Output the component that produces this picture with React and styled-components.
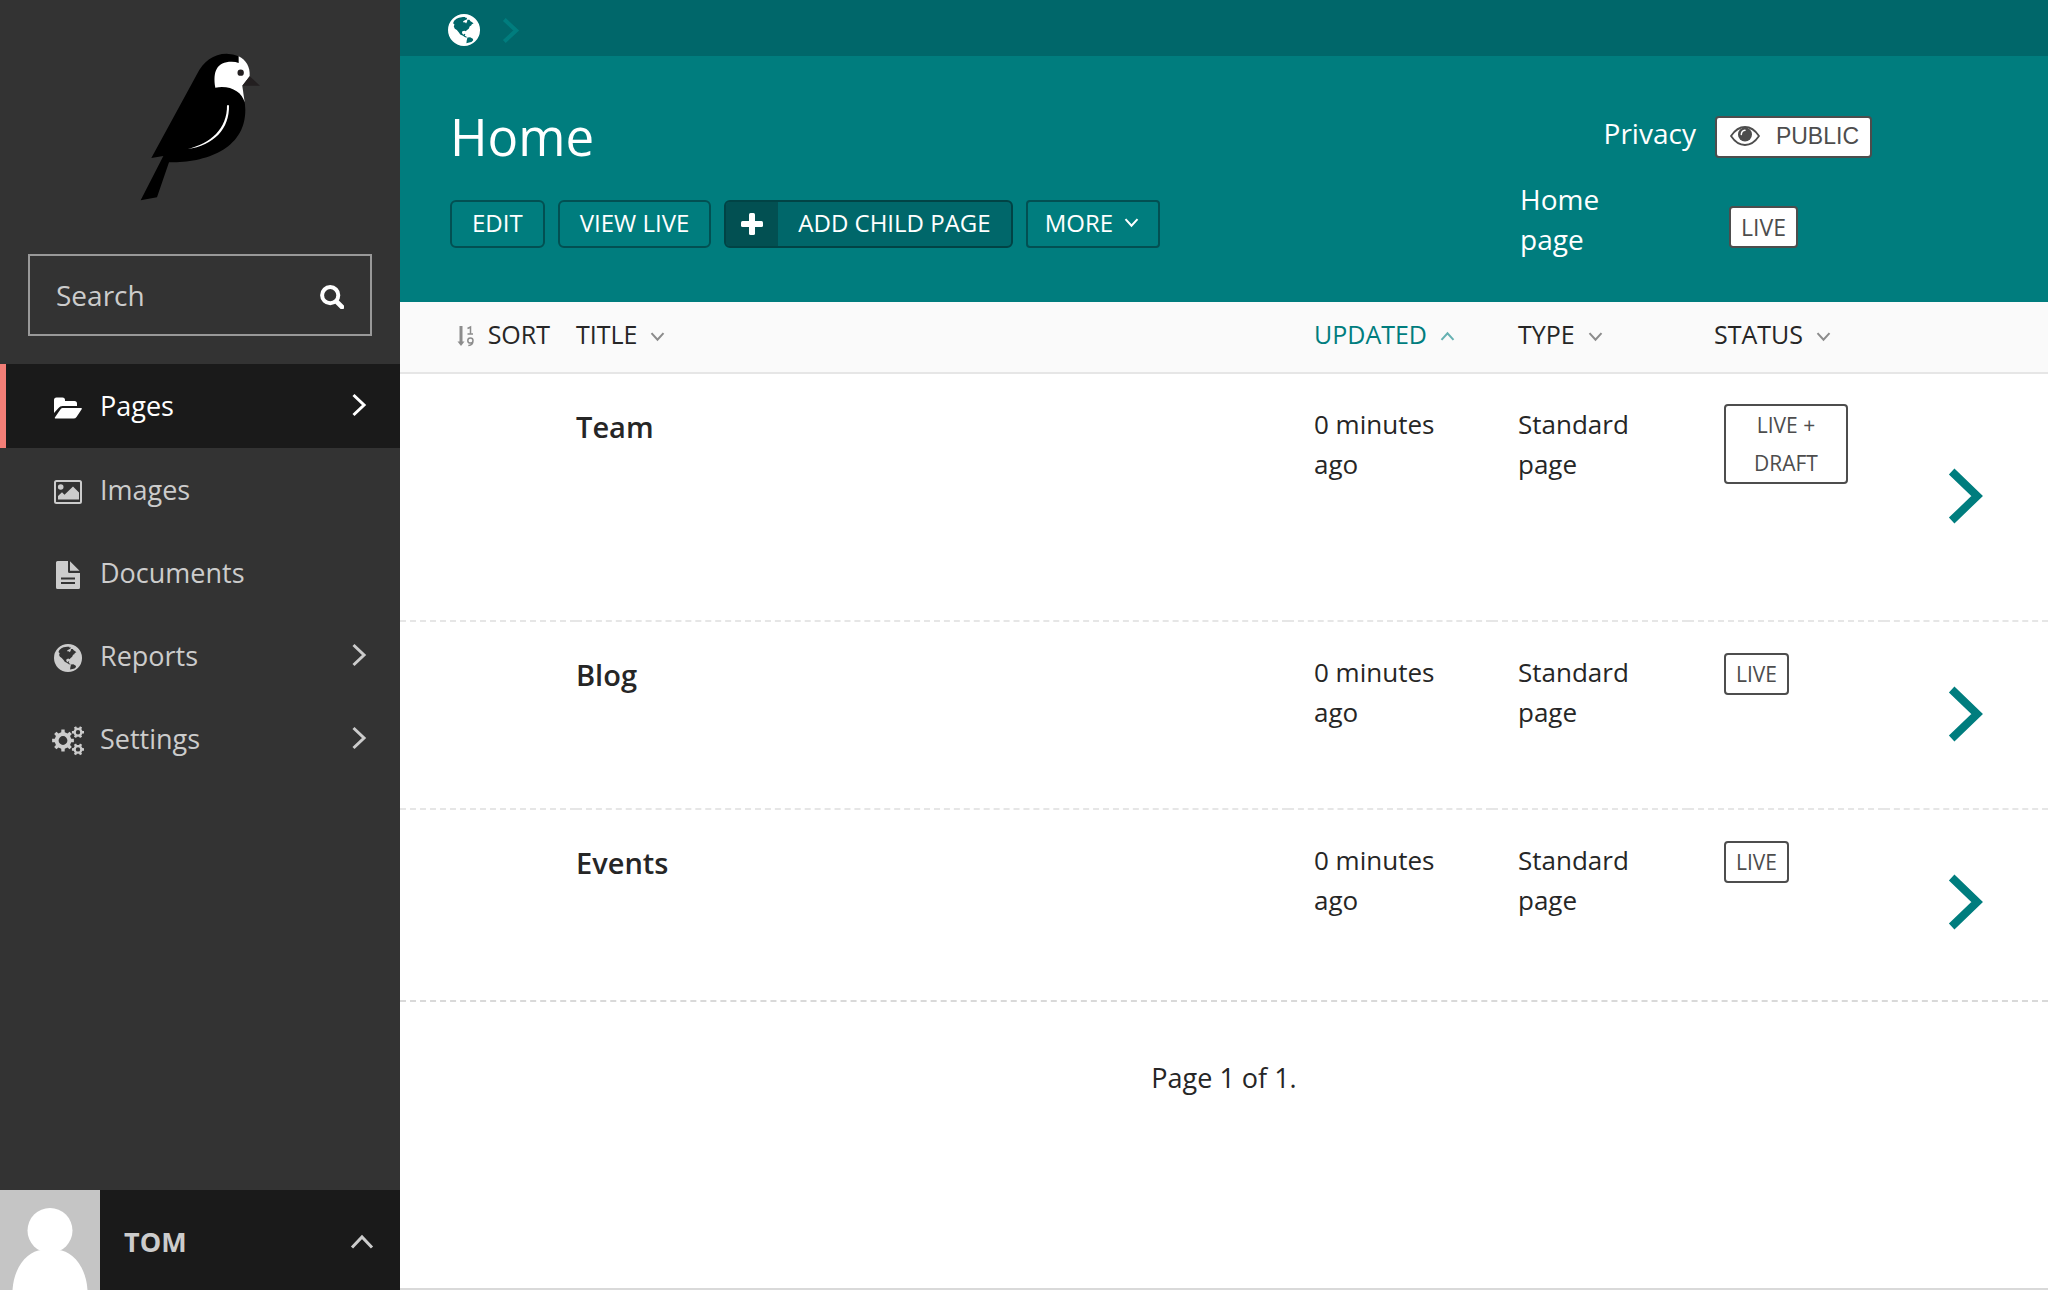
import React from 'react';
import styled, { createGlobalStyle, css } from 'styled-components';

const GlobalStyle = createGlobalStyle`
  *, *::before, *::after { box-sizing: border-box; }
  body {
    margin: 0;
    font-family: 'Open Sans', 'Noto Sans', sans-serif;
    font-size: 26px;
    line-height: 40px;
    color: #262626;
    background: #fff;
  }
  button, input { font: inherit; }
  a { color: inherit; text-decoration: none; }
  svg { display: block; flex: none; }
`;

/* ---------- icons ---------- */

const GlobeIcon = ({ size = 28 }) => (
  <svg width={size} height={size} viewBox="0 0 94 94" fill="currentColor" fillRule="evenodd" aria-hidden="true">
    <path
      d="M47 0a47 47 0 1 1 0 94 47 47 0 0 1 0-94z
        M15 27L18 20 25 14 32 11 44 9 52 9 50 12 56 11 55 16 48 19 44 22 46 25 50 24 53 28 56 23 57 17 63 17 66 21 71 24 75 28 70 30 68 34 64 36 61 43 56 47 52 51 48 49 42 51 41 56 45 61 49 58 51 60 49 64 54 66 56 69 50 68 44 64 36 60 32 54 26 47 20 43 17 37 19 31z
        M57 69L65 68 73 73 74 77 69 82 62 84 54 86 55 78z"
    />
  </svg>
);

const FolderIcon = () => (
  <svg width="28" height="22" viewBox="0 0 28 22" fill="currentColor" aria-hidden="true">
    <path d="M0 16V3a2.500 2.500 0 0 1 2.500-2.500h6A2.500 2.500 0 0 1 11 3v1h9.500A2.500 2.500 0 0 1 23 6.500V9H8.500a5 5 0 0 0-4 2z" />
    <path d="M8.500 11H27q1.500 0 .5 1.500l-5 7.500q-1 1.500-3 1.500H2q-2 0-.8-1.600l5-7.200Q7 11 8.500 11z" />
  </svg>
);

const ImageIcon = () => (
  <svg width="28" height="24" viewBox="0 0 28 24" fill="currentColor" aria-hidden="true">
    <rect x="1" y="1" width="26" height="22" rx="1.500" fill="none" stroke="currentColor" strokeWidth="2" />
    <circle cx="6.700" cy="7" r="2.800" />
    <path d="M4 19.500v-3.500l4-3.800 2.500 2.500L19 6.500l6 6v7z" />
  </svg>
);

const DocumentIcon = () => (
  <svg width="24" height="28" viewBox="0 0 24 28" fill="currentColor" aria-hidden="true">
    <path
      fillRule="evenodd"
      d="M1.500 0H12v10.500Q12 12 13.500 12H24v14.500q0 1.500-1.500 1.500h-21Q0 28 0 26.500v-25Q0 0 1.500 0zM5 16.500v2h14v-2zM5 21v2h14v-2z"
    />
    <path d="M14 0.200 23.500 9.800H14z" />
  </svg>
);

/* Outline of a toothed wheel with a round hole, around (cx, cy). */
function gearPath(cx, cy, outer, inner, hole, teeth, start = 0) {
  const step = (Math.PI * 2) / teeth;
  const points = [];
  for (let i = 0; i < teeth; i += 1) {
    const mid = start + i * step;
    [
      [inner, -0.27],
      [outer, -0.19],
      [outer, 0.19],
      [inner, 0.27],
    ].forEach(([r, f]) => {
      const a = mid + f * step;
      points.push(`${(cx + r * Math.cos(a)).toFixed(2)} ${(cy + r * Math.sin(a)).toFixed(2)}`);
    });
  }
  return `M${points.join('L')}ZM${cx - hole} ${cy}a${hole} ${hole} 0 1 0 ${hole * 2} 0a${hole} ${hole} 0 1 0 ${-hole * 2} 0z`;
}

const CogsIcon = () => (
  <svg width="32" height="30" viewBox="0 0 32 30" fill="currentColor" fillRule="evenodd" aria-hidden="true">
    <path d={gearPath(11, 14.5, 11, 8.4, 4.4, 8)} />
    <path d={gearPath(26, 6.2, 6.2, 4.6, 2.2, 6)} />
    <path d={gearPath(26, 23.4, 6.2, 4.6, 2.2, 6)} />
  </svg>
);

const SearchIcon = () => (
  <svg width="24" height="24" viewBox="0 0 24 24" fill="none" stroke="currentColor" aria-hidden="true">
    <circle cx="10.200" cy="10.200" r="8.100" strokeWidth="4" />
    <path d="M16.500 16.500 22 22" strokeWidth="4.600" strokeLinecap="round" />
  </svg>
);

const PlusIcon = () => (
  <svg width="22" height="22" viewBox="0 0 22 22" fill="currentColor" aria-hidden="true">
    <rect x="8" y="0" width="6" height="22" rx="1.500" />
    <rect x="0" y="8" width="22" height="6" rx="1.500" />
  </svg>
);

const EyeIcon = () => (
  <svg width="30" height="20" viewBox="0 0 30 20" fill="none" stroke="currentColor" aria-hidden="true">
    <path d="M1 10Q7 1 15 1t14 9q-6 9-14 9T1 10z" strokeWidth="1.800" />
    <circle cx="15" cy="8.500" r="7" fill="currentColor" stroke="none" />
    <path d="M11.300 8.500Q11.500 4.800 15 4.300" stroke="#fff" strokeWidth="1.500" strokeLinecap="round" />
  </svg>
);

const SortIcon = () => (
  <svg width="18" height="22" viewBox="0 0 18 22" fill="none" stroke="currentColor" aria-hidden="true">
    <path d="M4 1v17" strokeWidth="3" />
    <path d="M0.500 16.500h7L4 21z" fill="currentColor" stroke="none" />
    <path d="M10.500 3.500 13.500 2v7M10.500 9h5.500" strokeWidth="1.500" />
    <path d="M16 15.500a2.600 2.600 0 1 1-5.200 0 2.600 2.600 0 0 1 5.200 0q0 4.800-4.700 5" strokeWidth="1.500" />
  </svg>
);

const ROTATION = { right: 0, down: 90, up: -90 };

const Chevron = ({ dir = 'right', size = 24, weight = 3 }) => (
  <svg width={size} height={size} viewBox={`0 0 ${size} ${size}`} fill="none" stroke="currentColor" aria-hidden="true">
    <path
      d={`M${size * 0.27} ${weight / 2 + 0.5}L${size * 0.71} ${size / 2}L${size * 0.27} ${size - weight / 2 - 0.5}`}
      transform={`rotate(${ROTATION[dir]} ${size / 2} ${size / 2})`}
      strokeWidth={weight}
    />
  </svg>
);

const BirdLogo = () => (
  <svg width="121" height="148" viewBox="120 67 363 444" aria-hidden="true">
    <path d="M154 382 290 132C310 92 340 69 380 69q20 0 36 8l16 130q4 12 4 30C436 360 310 396 207 395L171 500 122 509 190 376z" />
    <path
      fill="#fff"
      d="M416 77C438 88 451 108 449 137L427 165 434 215C425 182 390 163 346 171 338 122 350 93 395 93q12 0 21 4z"
    />
    <circle cx="422" cy="126" r="9.500" fill="#231f20" />
    <path d="M449 137 480 165H427z" fill="#231f20" />
    <path d="M381 224h6C389 295 342 344 262 356 332 338 382 295 381 224z" fill="#fff" />
  </svg>
);

const AvatarArt = () => (
  <svg width="100" height="100" viewBox="0 0 100 100" aria-hidden="true">
    <circle cx="50" cy="40.500" r="22.500" fill="#fff" />
    <path d="M12.500 100C14 76 28 61 42 60H58C72 61 86 76 87.500 100z" fill="#fff" />
  </svg>
);

/* ---------- sidebar ---------- */

const Shell = styled.div`
  display: flex;
  min-height: 100vh;
`;

const Sidebar = styled.aside`
  display: flex;
  flex-direction: column;
  flex: none;
  width: 400px;
  background: #333;
  color: #ccc;
`;

const LogoLink = styled.a`
  display: flex;
  justify-content: center;
  padding: 53px 0;
`;

const SearchForm = styled.form`
  display: flex;
  align-items: center;
  height: 82px;
  margin: 0 28px 28px;
  padding-right: 26px;
  border: 2px solid #999;
`;

const SearchInput = styled.input`
  flex: 1;
  min-width: 0;
  height: 100%;
  padding: 0 0 0 26px;
  border: 0;
  outline: 0;
  background: transparent;
  color: #ccc;
  font-size: 28px;
  &::placeholder { color: #ccc; opacity: 1; }
`;

const IconButton = styled.button`
  padding: 4px 0 0;
  border: 0;
  background: none;
  color: #fff;
`;

const Menu = styled.ul`
  margin: 0;
  padding: 0;
  list-style: none;
`;

const MenuLink = styled.a`
  display: flex;
  align-items: center;
  height: 83px;
  padding: 0 29px 2px 52px;
  font-size: 27px;
  color: #ccc;
  ${(p) =>
    p.$active &&
    css`
      height: 84px;
      padding-left: 46px;
      border-left: 6px solid #f37e77;
      background: #1a1a1a;
      color: #fff;
    `}
`;

const MenuIcon = styled.span`
  display: flex;
  justify-content: center;
  width: 32px;
  margin-right: 16px;
  padding-top: 6px;
`;

const MenuLabel = styled.span`
  flex: 1;
  padding-top: 2px;
`;

const Account = styled.button`
  display: flex;
  align-items: stretch;
  height: 100px;
  margin-top: auto;
  padding: 0;
  border: 0;
  background: #1a1a1a;
  color: #ccc;
  font-size: 27px;
  font-weight: 700;
  text-align: left;
`;

const Avatar = styled.span`
  background: #c5c5c5;
`;

const AccountBody = styled.span`
  display: flex;
  align-items: center;
  justify-content: space-between;
  flex: 1;
  padding: 4px 26px 0 24px;
`;

/* ---------- header ---------- */

const Main = styled.main`
  display: flex;
  flex-direction: column;
  flex: 1;
  min-width: 0;
  border-bottom: 2px solid #d9d9d9;
`;

const Breadcrumb = styled.nav`
  display: flex;
  align-items: center;
  gap: 17px;
  height: 56px;
  padding: 4px 48px 0;
  background: #00676a;
  color: #007d7e;
`;

const HomeLink = styled.a`
  color: #fff;
`;

const Header = styled.header`
  display: flex;
  justify-content: space-between;
  padding: 44px 176px 43px 50px;
  background: #007d7e;
  color: #fff;
`;

const Title = styled.h1`
  margin: 0 0 28px;
  font-size: 51px;
  line-height: 72px;
  font-weight: 400;
`;

const Actions = styled.div`
  display: flex;
  gap: 13px;
`;

const Action = styled.button`
  display: flex;
  align-items: center;
  height: 48px;
  padding: 0 20px 3px;
  border: 2px solid #025052;
  border-radius: 6px;
  background: transparent;
  color: #fff;
  font-size: 24px;
  line-height: 40px;
`;

const FilledAction = styled(Action)`
  padding: 0 20px 0 0;
  border-color: #014345;
  background: #00676a;
`;

const MenuAction = styled(Action)`
  gap: 11px;
  padding: 0 19px 3px 17px;
  border-radius: 4px;
`;

const ActionIcon = styled.span`
  display: flex;
  align-items: center;
  justify-content: center;
  width: 52px;
  height: 44px;
  margin-right: 20px;
  border-radius: 4px 0 0 4px;
  background: #025052;
`;

const ActionText = styled.span`
  padding-bottom: 3px;
`;

const Meta = styled.div`
  width: 352px;
  font-size: 28px;
`;

const MetaPrivacy = styled.div`
  display: flex;
  align-items: flex-end;
  justify-content: flex-end;
  gap: 19px;
  padding: 13px 0 21px;
`;

const MetaLabel = styled.span`
  padding-bottom: 5px;
`;

const MetaStatus = styled.div`
  display: flex;
  align-items: flex-start;
  justify-content: space-between;
  padding-right: 74px;
`;

const MetaType = styled.span`
  width: 112px;
`;

const MetaTag = styled.span`
  padding-top: 26px;
`;

const PrivacyButton = styled.button`
  display: flex;
  align-items: center;
  gap: 16px;
  height: 42px;
  padding: 0 11px 2px 13px;
  border: 2px solid #4d4d4d;
  border-radius: 4px;
  background: #fff;
  color: #4d4d4d;
  font-family: 'Liberation Sans', sans-serif;
  font-size: 23px;
`;

const Tag = styled.a`
  display: inline-block;
  padding: 0 10px;
  border: 2px solid #4d4d4d;
  border-radius: 4px;
  background: #fff;
  color: #4d4d4d;
  font-size: ${(p) => (p.$large ? 23 : 21)}px;
  line-height: 38px;
  text-align: center;
`;

/* ---------- listing ---------- */

const Listing = styled.table`
  width: 100%;
  table-layout: fixed;
  border-collapse: separate;
  border-spacing: 0;
`;

const Col = styled.col`
  width: ${(p) => p.$width};
`;

const HeadCell = styled.th`
  height: 72px;
  padding: 0 0 0 ${(p) => (p.$flush ? 0 : 26)}px;
  border-bottom: 2px solid #e6e6e6;
  background: #fafafa;
  font-size: 25px;
  font-weight: 400;
  text-align: left;
  vertical-align: middle;
`;

const HeadLink = styled.a`
  display: flex;
  align-items: center;
  justify-content: ${(p) => (p.$end ? 'flex-end' : 'flex-start')};
  gap: 13px;
  padding: 0 ${(p) => (p.$end ? 26 : 0)}px 6px 0;
  color: ${(p) => (p.$current ? '#007d7e' : 'inherit')};
`;

const HeadIcon = styled.span`
  padding-top: 4px;
  color: ${(p) => (p.$current ? '#66b1b2' : '#8c8c8c')};
`;

const Cell = styled.td`
  height: 188px;
  padding: 30px 40px 60px ${(p) => (p.$flush ? 0 : 26)}px;
  border-bottom: 2px dashed ${(p) => (p.$last ? 'transparent' : '#e6e6e6')};
  vertical-align: top;
`;

const StatusCell = styled(Cell)`
  padding: 30px 36px ${(p) => (p.$tall ? 136 : 60)}px;
`;

const ExploreCell = styled(Cell)`
  padding: 0 54px 2px 0;
  vertical-align: middle;
  color: #007d7e;
`;

const ExploreLink = styled.a`
  display: flex;
  justify-content: flex-end;
`;

const PageLink = styled.a`
  font-size: 29px;
  line-height: 46px;
  font-weight: 600;
`;

const Pagination = styled.nav`
  margin-top: 2px;
  padding: 56px 50px;
  border-top: 2px dashed #d9d9d9;
  text-align: center;
  font-size: 27px;
`;

const menu = [
  { label: 'Pages', icon: <FolderIcon />, nested: true, active: true },
  { label: 'Images', icon: <ImageIcon /> },
  { label: 'Documents', icon: <DocumentIcon /> },
  { label: 'Reports', icon: <GlobeIcon />, nested: true },
  { label: 'Settings', icon: <CogsIcon />, nested: true },
];

const columns = [
  { label: 'UPDATED', dir: 'up', current: true },
  { label: 'TYPE', dir: 'down' },
  { label: 'STATUS', dir: 'down' },
];

const pages = [
  { title: 'Team', status: 'LIVE + DRAFT' },
  { title: 'Blog', status: 'LIVE' },
  { title: 'Events', status: 'LIVE' },
];

export default function App() {
  return (
    <Shell>
      <GlobalStyle />
      <Sidebar>
        <LogoLink href="#dashboard" aria-label="Dashboard">
          <BirdLogo />
        </LogoLink>
        <SearchForm role="search">
          <SearchInput type="text" placeholder="Search" aria-label="Search" />
          <IconButton type="button" aria-label="Search">
            <SearchIcon />
          </IconButton>
        </SearchForm>
        <nav>
          <Menu>
            {menu.map((item) => (
              <li key={item.label}>
                <MenuLink href={`#${item.label.toLowerCase()}`} $active={item.active}>
                  <MenuIcon>{item.icon}</MenuIcon>
                  <MenuLabel>{item.label}</MenuLabel>
                  {item.nested && <Chevron />}
                </MenuLink>
              </li>
            ))}
          </Menu>
        </nav>
        <Account type="button">
          <Avatar>
            <AvatarArt />
          </Avatar>
          <AccountBody>
            <span>TOM</span>
            <Chevron dir="up" />
          </AccountBody>
        </Account>
      </Sidebar>

      <Main>
        <Breadcrumb aria-label="Breadcrumb">
          <HomeLink href="#root" aria-label="Root">
            <GlobeIcon size={32} />
          </HomeLink>
          <Chevron size={27} weight={4} />
        </Breadcrumb>

        <Header>
          <div>
            <Title>Home</Title>
            <Actions>
              <Action type="button">EDIT</Action>
              <Action type="button">VIEW LIVE</Action>
              <FilledAction type="button">
                <ActionIcon>
                  <PlusIcon />
                </ActionIcon>
                <ActionText>ADD CHILD PAGE</ActionText>
              </FilledAction>
              <MenuAction type="button">
                MORE
                <Chevron dir="down" size={15} weight={2} />
              </MenuAction>
            </Actions>
          </div>
          <Meta>
            <MetaPrivacy>
              <MetaLabel>Privacy</MetaLabel>
              <PrivacyButton type="button">
                <EyeIcon />
                <span>PUBLIC</span>
              </PrivacyButton>
            </MetaPrivacy>
            <MetaStatus>
              <MetaType>Home page</MetaType>
              <MetaTag>
                <Tag href="#live" $large>
                  LIVE
                </Tag>
              </MetaTag>
            </MetaStatus>
          </Meta>
        </Header>

        <Listing>
          <colgroup>
            <Col $width="176px" />
            <Col $width="auto" />
            <Col $width="204px" />
            <Col $width="196px" />
            <Col $width="196px" />
            <Col $width="164px" />
          </colgroup>
          <thead>
            <tr>
              <HeadCell $flush>
                <HeadLink href="#sort" $end>
                  <HeadIcon>
                    <SortIcon />
                  </HeadIcon>
                  SORT
                </HeadLink>
              </HeadCell>
              <HeadCell $flush>
                <HeadLink href="#title">
                  TITLE
                  <HeadIcon>
                    <Chevron dir="down" size={15} weight={2} />
                  </HeadIcon>
                </HeadLink>
              </HeadCell>
              {columns.map((c) => (
                <HeadCell key={c.label}>
                  <HeadLink href={`#${c.label.toLowerCase()}`} $current={c.current}>
                    {c.label}
                    <HeadIcon $current={c.current}>
                      <Chevron dir={c.dir} size={15} weight={2} />
                    </HeadIcon>
                  </HeadLink>
                </HeadCell>
              ))}
              <HeadCell $flush />
            </tr>
          </thead>
          <tbody>
            {pages.map((page, i) => {
              const last = i === pages.length - 1;
              return (
                <tr key={page.title}>
                  <Cell $last={last} />
                  <Cell $flush $last={last}>
                    <PageLink href={`#${page.title.toLowerCase()}`}>{page.title}</PageLink>
                  </Cell>
                  <Cell $last={last}>0 minutes ago</Cell>
                  <Cell $last={last}>Standard page</Cell>
                  <StatusCell $last={last} $tall={i === 0}>
                    <Tag href="#status">{page.status}</Tag>
                  </StatusCell>
                  <ExploreCell $last={last}>
                    <ExploreLink href="#explore" aria-label={`Explore ${page.title}`}>
                      <Chevron size={58} weight={8} />
                    </ExploreLink>
                  </ExploreCell>
                </tr>
              );
            })}
          </tbody>
        </Listing>
        <Pagination aria-label="Pagination">Page 1 of 1.</Pagination>
      </Main>
    </Shell>
  );
}
